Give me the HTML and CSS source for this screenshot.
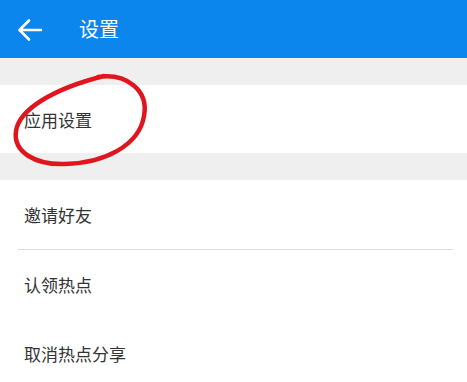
FILE: index.html
```html
<!DOCTYPE html>
<html lang="zh">
<head>
<meta charset="utf-8">
<link rel="stylesheet" href="styles.css">
</head>
<body>
<div class="page">
  <header class="bar">
    <svg class="back" width="26" height="26" viewBox="0 0 26 26">
      <path d="M24 13 H3 M12 3.5 L2.5 13 L12 22.5" fill="none" stroke="#fff" stroke-width="2.6" stroke-linecap="round" stroke-linejoin="round"/>
    </svg>
    <span class="title">设置</span>
  </header>
  <div class="gap"></div>
  <section class="group">
    <div class="row">应用设置</div>
  </section>
  <div class="gap"></div>
  <section class="group">
    <div class="row">邀请好友</div>
    <div class="divider"></div>
    <div class="row">认领热点</div>
    <div class="row">取消热点分享</div>
  </section>
  <svg class="mark" width="467" height="382" viewBox="0 0 467 382">
    <path d="M98 77 C126 73 149 90 144 116 C139 146 104 163 65 164 C35 165 13 152 16 131 C19 110 52 89 104 76" fill="none" stroke="#e0161e" stroke-width="4.5" stroke-linecap="round"/>
  </svg>
</div>
</body>
</html>
```
FILE: styles.css
```css
html, body {
  margin: 0;
  padding: 0;
  background: #efefef;
}
.page {
  position: relative;
  width: 467px;
  height: 382px;
  overflow: hidden;
  font-family: "Noto Sans CJK SC", "Noto Sans", sans-serif;
}
.bar {
  height: 58px;
  background: #0b86ed;
  display: flex;
  align-items: center;
  padding-left: 17px;
  box-sizing: border-box;
}
.back {
  display: block;
  margin-top: 1px;
}
.title {
  color: #fff;
  font-size: 20px;
  margin-left: 36px;
  line-height: 1;
}
.gap {
  height: 27px;
  background: #efefef;
}
.group {
  background: #fff;
}
.row {
  height: 69px;
  display: flex;
  align-items: center;
  padding-left: 24px;
  font-size: 17px;
  color: #333;
}
.group:first-of-type .row {
  height: 68px;
}
.divider {
  height: 1px;
  margin: 0 14px 0 18px;
  background: #dcdcdc;
}
.mark {
  position: absolute;
  left: 0;
  top: 0;
  pointer-events: none;
}
```
